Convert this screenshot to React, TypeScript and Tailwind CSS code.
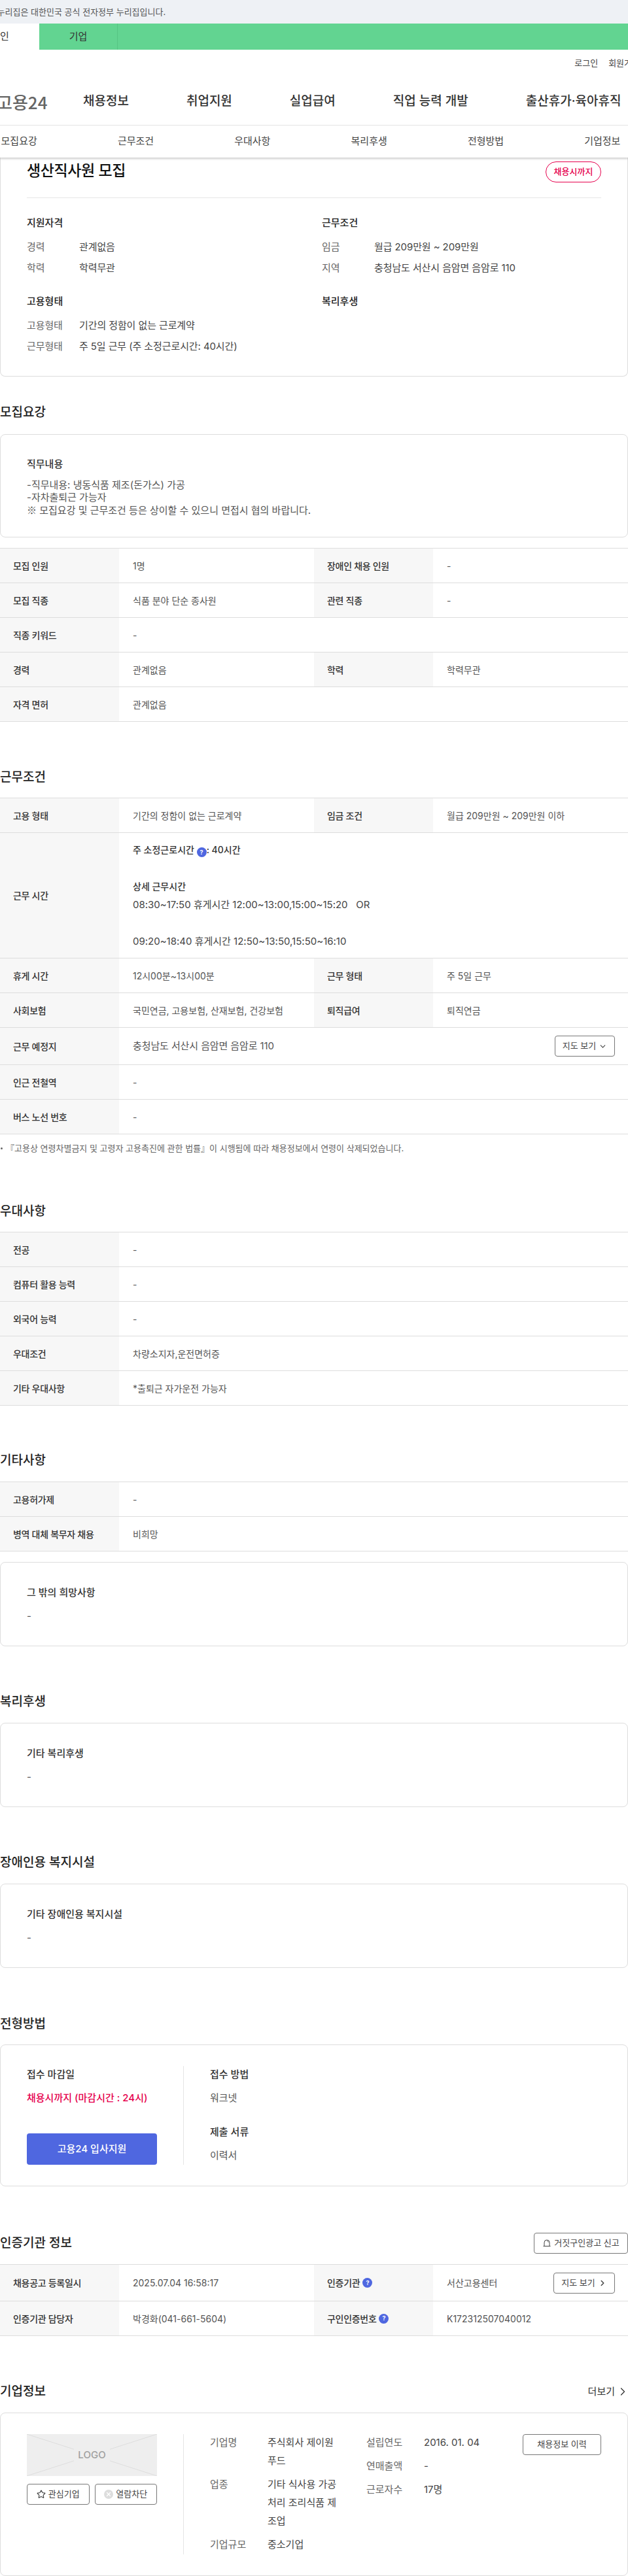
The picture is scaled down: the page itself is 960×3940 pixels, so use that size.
import { ChevronDown, ChevronRight, Star, X } from 'lucide-react'
import type { ReactNode } from 'react'

function Help() {
  return (
    <span className="inline-flex w-[15px] h-[15px] rounded-full bg-[#4f67e0] text-white text-[9px] font-bold items-center justify-center align-[-2px]">?</span>
  )
}

function Heading({ children, className = '' }: { children: ReactNode; className?: string }) {
  return <h2 className={`h-[26px] leading-[26px] text-[19px] font-medium text-[#222] ${className}`}>{children}</h2>
}

function Row({ cells, height = 'h-[53px]', extra }: { cells: [ReactNode, ReactNode][]; height?: string; extra?: ReactNode }) {
  return (
    <div className={`flex border-b border-[#ddd] ${height}`}>
      {cells.map(([label, value], i) => (
        <div key={i} className={`flex ${cells.length === 1 ? 'w-full' : 'w-[480px]'}`}>
          <div className="w-[182px] shrink-0 bg-[#f7f7f7] pl-5 flex items-center gap-1 font-medium tracking-[-0.3px] text-[#333]">{label}</div>
          <div className="flex-1 pl-[21px] pr-5 flex items-center justify-between text-[#555]">
            <span>{value}</span>
            {i === cells.length - 1 && extra}
          </div>
        </div>
      ))}
    </div>
  )
}

function Table({ rows, className = '' }: { rows: [ReactNode, ReactNode][][]; className?: string }) {
  return (
    <div className={`border-t border-[#ddd] ${className}`}>
      {rows.map((cells, i) => (
        <Row key={i} cells={cells} />
      ))}
    </div>
  )
}

function SmallBtn({ children, className = '' }: { children: ReactNode; className?: string }) {
  return (
    <button className={`h-8 border border-[#777] rounded-[4px] bg-white text-[13px] text-[#444] flex items-center justify-center ${className}`}>{children}</button>
  )
}

function InfoCard({ title, className = '' }: { title: string; className?: string }) {
  return (
    <div className={`h-[129px] border border-[#ddd] rounded-lg px-10 pt-9 text-[15px] ${className}`}>
      <h3 className="h-5 leading-5 font-medium text-[#333]">{title}</h3>
      <p className="mt-4 h-5 leading-5 text-[#555]">-</p>
    </div>
  )
}

function Pair({ label, value }: { label: string; value: string }) {
  return (
    <div className="flex h-8 items-center text-[15px] tracking-[-0.1px]">
      <span className="w-[80px] text-[#666]">{label}</span>
      <span className="text-[#444]">{value}</span>
    </div>
  )
}

function Detail({ label, lines, className = '' }: { label: string; lines: string[]; className?: string }) {
  return (
    <div className={`flex leading-7 ${className}`}>
      <span className="w-[88px] shrink-0 text-[#666]">{label}</span>
      <div className="text-[#444]">
        {lines.map((l) => (
          <div key={l}>{l}</div>
        ))}
      </div>
    </div>
  )
}

export default function App() {
  return (
    <div className="w-[960px] overflow-hidden bg-white text-[14px] font-['Inter','Noto_Sans_CJK_KR',sans-serif]">
      {/* government banner */}
      <div className="h-9 bg-[#eef1f5] text-[13px] leading-9 text-[#555] whitespace-nowrap -ml-[20px]">이 누리집은 대한민국 공식 전자정부 누리집입니다.</div>

      {/* personal / company tabs */}
      <div className="h-10 bg-[#62d491] -ml-[60px] flex text-[15px] leading-10 text-[#333]">
        <div className="w-[120px] bg-white text-center">개인</div>
        <div className="w-[120px] border-r border-[#55c583] text-center">기업</div>
      </div>

      <div className="h-11 flex justify-end gap-4 pt-[11px] text-[13px] leading-[18px] text-[#444] -mr-[18px]">
        <span>로그인</span>
        <span>회원가입</span>
      </div>

      {/* main nav */}
      <div className="h-[72px] flex items-center -ml-[5px] whitespace-nowrap border-b border-[#e5e5e5] text-[19px] font-medium text-[#333]">
        <div className="w-[132px] text-[26px] font-medium font-['Noto_Sans_CJK_KR',sans-serif] text-[#666]">고용24</div>
        <div className="flex gap-[88px]">
          <span>채용정보</span>
          <span>취업지원</span>
          <span>실업급여</span>
          <span>직업 능력 개발</span>
          <span>출산휴가·육아휴직</span>
        </div>
      </div>

      {/* anchors */}
      <div className="relative z-10 h-[49px] bg-white shadow-[0_2px_3px_rgba(0,0,0,0.2)]">
        <div className="flex w-[1070px] -ml-[60px] h-full items-center text-[15px] text-[#444]">
          {['모집요강', '근무조건', '우대사항', '복리후생', '전형방법', '기업정보'].map((t) => (
            <span key={t} className="flex-1 text-center">{t}</span>
          ))}
        </div>
      </div>

      {/* job title card */}
      <div className="h-[335px] border border-t-0 border-[#ddd] rounded-b-lg px-10 text-[15px]">
        <div className="flex justify-between h-[62px] border-b border-[#e5e5e5]">
          <h1 className="text-[23px] tracking-[-0.4px] font-medium leading-[40px] text-[#111]">생산직사원 모집</h1>
          <span className="mt-1.5 h-8 w-[85px] rounded-full border border-[#e6004d] text-[#e6004d] text-[13px] font-medium flex items-center justify-center">채용시까지</span>
        </div>
        <div className="grid grid-cols-[451px_1fr]">
          <div className="pt-7">
            <h3 className="font-medium text-[#222] h-5 leading-5 mb-[11px]">지원자격</h3>
            <Pair label="경력" value="관계없음" />
            <Pair label="학력" value="학력무관" />
          </div>
          <div className="pt-7">
            <h3 className="font-medium text-[#222] h-5 leading-5 mb-[11px]">근무조건</h3>
            <Pair label="임금" value="월급 209만원 ~ 209만원" />
            <Pair label="지역" value="충청남도 서산시 음암면 음암로 110" />
          </div>
          <div className="pt-[25px]">
            <h3 className="font-medium text-[#222] h-5 leading-5 mb-[11px]">고용형태</h3>
            <Pair label="고용형태" value="기간의 정함이 없는 근로계약" />
            <Pair label="근무형태" value="주 5일 근무 (주 소정근로시간: 40시간)" />
          </div>
          <div className="pt-[25px]">
            <h3 className="font-medium text-[#222] h-5 leading-5">복리후생</h3>
          </div>
        </div>
      </div>

      {/* 모집요강 */}
      <Heading className="mt-[42px]">모집요강</Heading>
      <div className="mt-5 h-[158px] border border-[#ddd] rounded-lg px-10 pt-[35px] text-[15px]">
        <h3 className="h-5 leading-5 font-medium text-[#333]">직무내용</h3>
        <div className="mt-3 leading-[19px] text-[#555]">
          <p>-직무내용: 냉동식품 제조(돈가스) 가공</p>
          <p>-자차출퇴근 가능자</p>
          <p><span className="font-['Noto_Sans_CJK_KR',sans-serif]">※</span> 모집요강 및 근무조건 등은 상이할 수 있으니 면접시 협의 바랍니다.</p>
        </div>
      </div>
      <Table
        className="mt-4"
        rows={[
          [['모집 인원', '1명'], ['장애인 채용 인원', '-']],
          [['모집 직종', '식품 분야 단순 종사원'], ['관련 직종', '-']],
          [['직종 키워드', '-']],
          [['경력', '관계없음'], ['학력', '학력무관']],
          [['자격 면허', '관계없음']],
        ]}
      />

      {/* 근무조건 */}
      <Heading className="mt-[72px]">근무조건</Heading>
      <div className="mt-[18px] border-t border-[#ddd]">
        <Row cells={[['고용 형태', '기간의 정함이 없는 근로계약'], ['임금 조건', '월급 209만원 ~ 209만원 이하']]} />
        <Row
          height="h-[192px]"
          cells={[[
            '근무 시간',
            <div className="leading-7 text-[15px] text-[#444]">
              <div className="font-medium text-[14px] text-[#333]">주 소정근로시간 <Help />: 40시간</div>
              <div className="h-7" />
              <div className="font-medium text-[14px] text-[#333]">상세 근무시간</div>
              <div>08:30~17:50 휴게시간 12:00~13:00,15:00~15:20 &nbsp; OR</div>
              <div className="h-7" />
              <div>09:20~18:40 휴게시간 12:50~13:50,15:50~16:10</div>
            </div>,
          ]]}
        />
        <Row cells={[['휴게 시간', '12시00분~13시00분'], ['근무 형태', '주 5일 근무']]} />
        <Row cells={[['사회보험', '국민연금, 고용보험, 산재보험, 건강보험'], ['퇴직급여', '퇴직연금']]} />
        <Row
          height="h-[57px]"
          cells={[['근무 예정지', <span className="text-[15px] tracking-[-0.1px]">충청남도 서산시 음암면 음암로 110</span>]]}
          extra={<SmallBtn className="w-[92px] gap-1">지도 보기 <ChevronDown size={13} /></SmallBtn>}
        />
        <Row cells={[['인근 전철역', '-']]} />
        <Row cells={[['버스 노선 번호', '-']]} />
      </div>
      <p className="mt-[11px] h-5 leading-5 text-[13px] text-[#666] flex items-center gap-[5px]">
        <span className="w-[3px] h-[3px] rounded-full bg-[#666] ml-[1px]" />
        『고용상 연령차별금지 및 고령자 고용촉진에 관한 법률』이 시행됨에 따라 채용정보에서 연령이 삭제되었습니다.
      </p>

      {/* 우대사항 */}
      <Heading className="mt-[74px]">우대사항</Heading>
      <Table
        className="mt-[18px]"
        rows={[
          [['전공', '-']],
          [['컴퓨터 활용 능력', '-']],
          [['외국어 능력', '-']],
          [['우대조건', '차량소지자,운전면허증']],
          [['기타 우대사항', '*출퇴근 자가운전 가능자']],
        ]}
      />

      {/* 기타사항 */}
      <Heading className="mt-[71px]">기타사항</Heading>
      <Table className="mt-[19px]" rows={[[['고용허가제', '-']], [['병역 대체 복무자 채용', '비희망']]]} />
      <InfoCard title="그 밖의 희망사항" className="mt-4" />

      {/* 복리후생 */}
      <Heading className="mt-[72px]">복리후생</Heading>
      <InfoCard title="기타 복리후생" className="mt-[19px]" />

      {/* 장애인용 복지시설 */}
      <Heading className="mt-[72px]">장애인용 복지시설</Heading>
      <InfoCard title="기타 장애인용 복지시설" className="mt-[19px]" />

      {/* 전형방법 */}
      <Heading className="mt-[73px]">전형방법</Heading>
      <div className="mt-[18px] h-[217px] border border-[#ddd] rounded-lg flex px-10 py-8 text-[15px]">
        <div className="w-[240px] pr-10 border-r border-[#e5e5e5] flex flex-col">
          <div className="font-medium text-[#333] h-5 leading-5 mt-[3px]">접수 마감일</div>
          <div className="font-medium text-[#e6004d] h-5 leading-5 mt-4 whitespace-nowrap">채용시까지 (마감시간 : 24시)</div>
          <button className="mt-auto h-12 w-[199px] rounded-[4px] bg-[#4f67e0] text-white font-medium">고용24 입사지원</button>
        </div>
        <div className="pl-10 text-[#555]">
          <div className="font-medium text-[#333] h-5 leading-5 mt-[3px]">접수 방법</div>
          <div className="h-5 leading-5 mt-4">워크넷</div>
          <div className="font-medium text-[#333] h-5 leading-5 mt-8">제출 서류</div>
          <div className="h-5 leading-5 mt-4">이력서</div>
        </div>
      </div>

      {/* 인증기관 정보 */}
      <div className="mt-[71px] flex items-center justify-between h-8">
        <Heading>인증기관 정보</Heading>
        <SmallBtn className="w-[144px] gap-1">
          <svg width="14" height="14" viewBox="0 0 14 14" fill="none" stroke="currentColor" strokeWidth="1">
            <path d="M3 11.5V6a4 4 0 0 1 8 0v5.5" />
            <path d="M1.5 11.5h11" />
            <path d="M7.5 3.5a2.5 2.5 0 0 1 1.7 2" />
          </svg>
          거짓구인광고 신고
        </SmallBtn>
      </div>
      <div className="mt-4 border-t border-[#ddd]">
        <Row
          height="h-[56px]"
          cells={[
            ['채용공고 등록일시', '2025.07.04 16:58:17'],
            [<>인증기관 <Help /></>, '서산고용센터'],
          ]}
          extra={<SmallBtn className="w-[94px] gap-1">지도 보기 <ChevronRight size={14} strokeWidth={2.5} /></SmallBtn>}
        />
        <Row cells={[['인증기관 담당자', '박경화(041-661-5604)'], [<>구인인증번호 <Help /></>, 'K172312507040012']]} />
      </div>

      {/* 기업정보 */}
      <div className="mt-[72px] flex items-center justify-between h-[26px]">
        <Heading>기업정보</Heading>
        <span className="flex items-center text-[15px] text-[#333] -mr-[2px] gap-[2px]">더보기 <ChevronRight size={20} strokeWidth={1.5} /></span>
      </div>
      <div className="mt-[19px] h-[250px] border border-[#ddd] rounded-lg flex px-10 pt-8 text-[15px]">
        <div className="w-[240px] pr-10 h-[184px] border-r border-[#e5e5e5]">
          <div className="relative h-16 w-[199px] bg-[#eee] flex items-center justify-center text-[#a0a0a0] font-medium">
            <svg className="absolute inset-0 w-full h-full" viewBox="0 0 199 64" preserveAspectRatio="none">
              <path d="M0 0L199 64M199 0L0 64" stroke="#ddd" strokeWidth="1" />
            </svg>
            <span className="relative bg-[#eee] w-[55px] text-center leading-6">LOGO</span>
          </div>
          <div className="mt-3 flex gap-2 w-[199px]">
            <SmallBtn className="flex-1 gap-1"><Star size={14} /> 관심기업</SmallBtn>
            <SmallBtn className="flex-1 gap-1">
              <span className="w-[14px] h-[14px] rounded-full bg-[#ddd] text-white flex items-center justify-center"><X size={10} strokeWidth={3} /></span>
              열람차단
            </SmallBtn>
          </div>
        </div>
        <div className="pl-10 w-[279px] -mt-px">
          <Detail label="기업명" lines={['주식회사 제이원', '푸드']} />
          <Detail className="mt-2" label="업종" lines={['기타 식사용 가공', '처리 조리식품 제', '조업']} />
          <Detail className="mt-2" label="기업규모" lines={['중소기업']} />
        </div>
        <div className="w-[239px] -mt-px">
          <Detail label="설립연도" lines={['2016. 01. 04']} />
          <Detail className="mt-2" label="연매출액" lines={['-']} />
          <Detail className="mt-2" label="근로자수" lines={['17명']} />
        </div>
        <SmallBtn className="w-[120px] shrink-0">채용정보 이력</SmallBtn>
      </div>
    </div>
  )
}
